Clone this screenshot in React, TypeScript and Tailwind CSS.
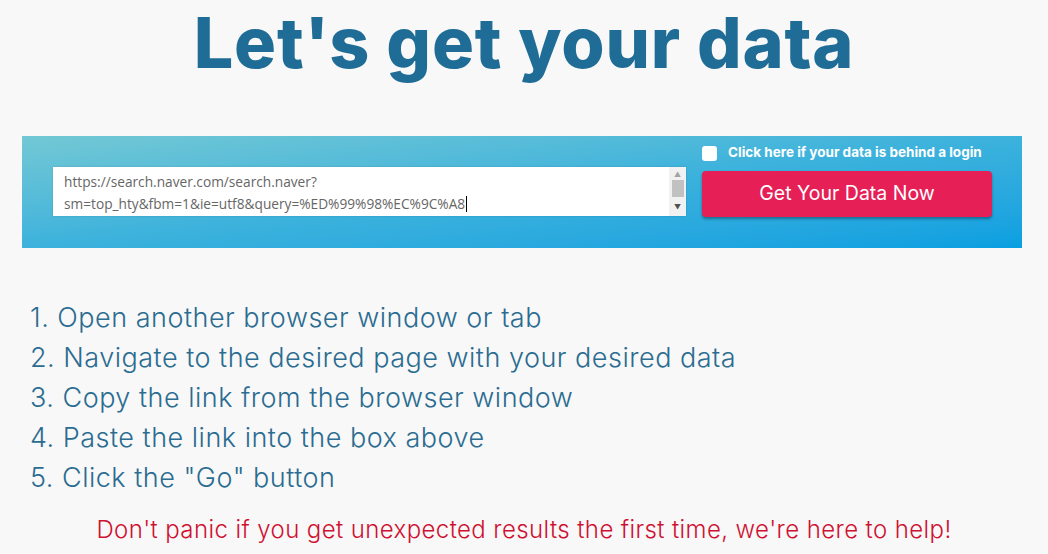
import { useState } from "react";

const steps = [
  "Open another browser window or tab",
  "Navigate to the desired page with your desired data",
  "Copy the link from the browser window",
  "Paste the link into the box above",
  'Click the "Go" button',
];

export default function App() {
  const [login, setLogin] = useState(false);

  return (
    <div className="min-h-[554px] w-full bg-[#f8f8f8] font-['Inter',sans-serif]">
      <h1 className="pt-[8px] text-center text-[70px] font-extrabold leading-none tracking-[0.8px] text-[#1f6d96]">
        Let's get your data
      </h1>

      <section className="ml-[22px] mt-[58px] flex h-[112px] w-[1000px] items-start gap-4 bg-gradient-to-br from-[#72c8d4] via-[#3cb2dc] to-[#079fe1] pl-[31px] pr-[30px]">
        <div className="mt-[31px] flex h-[49px] w-[633px] bg-white shadow-[0_0_2px_rgba(0,0,0,0.15)]">
          <p className="flex-1 px-[11px] pt-[4px] font-['Open_Sans',sans-serif] text-[13.7px] leading-[22px] text-[#666]">
            https://search.naver.com/search.naver?
            <br />
            sm=top_hty&amp;fbm=1&amp;ie=utf8&amp;query=%ED%99%98%EC%9C%A8
            <span className="ml-px inline-block h-[16px] w-px translate-y-[3px] bg-black" />
          </p>
          <div className="flex w-[17px] flex-col items-center bg-[#f1f1f1] py-[3px]">
            <span className="text-[7px] leading-[10px] text-[#a3a3a3]">▲</span>
            <div className="h-[17px] w-[12px] bg-[#c1c1c1]" />
            <div className="flex-1" />
            <span className="text-[7px] leading-[10px] text-[#505050]">▼</span>
          </div>
        </div>

        <div className="flex flex-col pt-[9px]">
          <label className="flex h-[16px] cursor-pointer items-center gap-[11px]">
            <input
              type="checkbox"
              checked={login}
              onChange={(e) => setLogin(e.target.checked)}
              className="h-[15px] w-[15px] appearance-none rounded-[3px] bg-white checked:bg-[#e61f57]"
            />
            <span className="text-[13.5px] font-bold leading-none text-white">
              Click here if your data is behind a login
            </span>
          </label>
          <button className="mt-[10px] h-[46px] w-[290px] rounded-[4px] bg-[#e61f57] text-[19.5px] text-white shadow-[0_2px_3px_rgba(0,0,0,0.35)]">
            Get Your Data Now
          </button>
        </div>
      </section>

      <ol className="ml-[30px] mt-[50px] text-[27px] font-light leading-[40px] tracking-[0.5px] text-[#2b6c91]">
        {steps.map((s, i) => (
          <li key={s}>
            {i + 1}. {s}
          </li>
        ))}
      </ol>

      <p className="mt-[17px] text-center text-[24px] font-light leading-[30px] tracking-[0.4px] text-[#cf1131]">
        Don't panic if you get unexpected results the first time, we're here to help!
      </p>
    </div>
  );
}
